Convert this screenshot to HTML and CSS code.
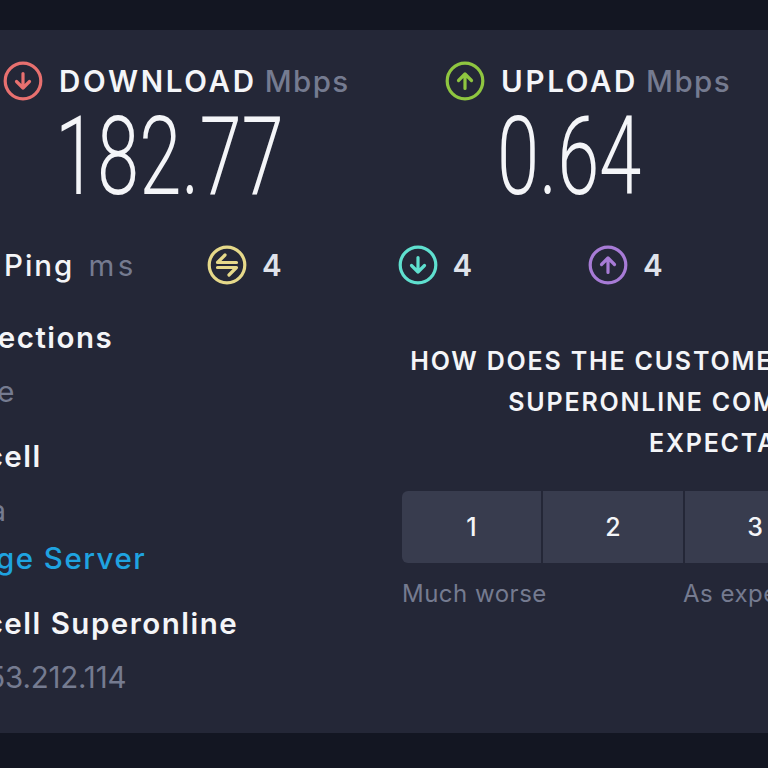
FILE: index.html
```html
<!DOCTYPE html>
<html lang="en">
<head>
  <meta charset="UTF-8">
  <meta name="viewport" content="width=device-width, initial-scale=1.0">
  <title>Speed Test Result</title>
  <link rel="stylesheet" href="styles.css">
</head>
<body>
  <div class="result-panel">
    <!-- Download and upload -->
    <div class="speed-row">
      <div class="speed-item">
        <div class="speed-label">
          <svg class="icon" viewBox="0 0 40 40" fill="none" stroke="#e8706f" stroke-width="3.2" stroke-linecap="round" stroke-linejoin="round">
            <circle cx="20" cy="20" r="17.8"/>
            <path d="M20 12.5V27M13.5 20.5l6.5 6.5 6.5-6.5"/>
          </svg>
          <span class="label-text">DOWNLOAD</span>
          <span class="label-unit">Mbps</span>
        </div>
        <div class="speed-value">182.77</div>
      </div>
      <div class="speed-item">
        <div class="speed-label">
          <svg class="icon" viewBox="0 0 40 40" fill="none" stroke="#8fc640" stroke-width="3.2" stroke-linecap="round" stroke-linejoin="round">
            <circle cx="20" cy="20" r="17.8"/>
            <path d="M20 27.5V13M13.5 19.5l6.5-6.5 6.5 6.5"/>
          </svg>
          <span class="label-text">UPLOAD</span>
          <span class="label-unit">Mbps</span>
        </div>
        <div class="speed-value">0.64</div>
      </div>
    </div>

    <!-- Ping row -->
    <div class="ping-row">
      <div class="ping-name">
        <span class="ping-label">Ping</span>
        <span class="ping-unit">ms</span>
      </div>
      <div class="ping-item">
        <svg class="icon" viewBox="0 0 40 40" fill="none" stroke="#e6d98a" stroke-width="3.2" stroke-linecap="round" stroke-linejoin="round">
          <circle cx="20" cy="20" r="17.8"/>
          <path d="M29.5 17.5h-19l7.5-7.5M10.5 22.5h19l-7.5 7.5"/>
        </svg>
        <span>4</span>
      </div>
      <div class="ping-item">
        <svg class="icon" viewBox="0 0 40 40" fill="none" stroke="#5fe0cf" stroke-width="3.2" stroke-linecap="round" stroke-linejoin="round">
          <circle cx="20" cy="20" r="17.8"/>
          <path d="M20 12.5V27M13.5 20.5l6.5 6.5 6.5-6.5"/>
        </svg>
        <span>4</span>
      </div>
      <div class="ping-item">
        <svg class="icon" viewBox="0 0 40 40" fill="none" stroke="#a77bd6" stroke-width="3.2" stroke-linecap="round" stroke-linejoin="round">
          <circle cx="20" cy="20" r="17.8"/>
          <path d="M20 27.5V13M13.5 19.5l6.5-6.5 6.5 6.5"/>
        </svg>
        <span>4</span>
      </div>
    </div>

    <div class="details-row">
      <!-- Connection details -->
      <div class="details">
        <div class="detail-group">
          <div class="detail-title">Connections</div>
          <div class="detail-sub">Single</div>
        </div>
        <div class="detail-group">
          <div class="detail-title">Turkcell</div>
          <div class="detail-sub">Bursa</div>
          <a class="detail-link" href="#">Change Server</a>
        </div>
        <div class="detail-group">
          <div class="detail-title">Turkcell Superonline</div>
          <div class="detail-sub detail-ip">178.253.212.114</div>
        </div>
      </div>

      <!-- Survey -->
      <div class="survey">
        <div class="survey-question">HOW DOES THE CUSTOMER SERVICE OF TURKCELL<br>SUPERONLINE COMPARE WITH YOUR<br>EXPECTATIONS?</div>
        <div class="survey-scale">
          <button class="scale-btn">1</button>
          <button class="scale-btn">2</button>
          <button class="scale-btn">3</button>
          <button class="scale-btn">4</button>
          <button class="scale-btn">5</button>
        </div>
        <div class="scale-labels">
          <span class="scale-low">Much worse</span>
          <span>As expected</span>
        </div>
      </div>
    </div>
  </div>
</body>
</html>
```

FILE: styles.css
```css
body {
  margin: 0;
  height: 768px;
  overflow: hidden;
  background-color: #131622;
  font-family: Inter, "Noto Sans", sans-serif;
  color: #f4f5f8;
  padding-top: 30px;
  box-sizing: border-box;
}

.result-panel {
  height: 703px;
  width: 1300px;
  margin-left: -84px;
  background-color: #242737;
}

.icon {
  width: 40px;
  height: 40px;
  flex: none;
}

.speed-row {
  display: flex;
  padding-left: 87px;
  padding-top: 30px;
}

.speed-item {
  width: 442px;
}

.speed-label {
  display: flex;
  align-items: center;
  gap: 16px;
  font-size: 29.5px;
  height: 42px;
}

.label-text {
  font-weight: 600;
  letter-spacing: 2.7px;
}

.label-unit {
  color: #757b90;
  font-weight: 500;
  letter-spacing: 1.4px;
  margin-left: -8px;
}

.speed-value {
  font-family: Roboto, sans-serif;
  font-weight: 300;
  font-size: 110px;
  line-height: 110px;
  margin-left: 52px;
  transform: scaleX(0.69);
  transform-origin: left;
}

.ping-row {
  display: flex;
  align-items: center;
  height: 42px;
  margin-top: 32px;
  font-size: 29.5px;
  padding-left: 88px;
}

.ping-name {
  width: 203px;
  display: flex;
  gap: 14px;
}

.ping-label {
  font-weight: 500;
  letter-spacing: 2px;
}

.ping-unit {
  color: #757b90;
  letter-spacing: 3.5px;
}

.ping-item {
  display: flex;
  align-items: center;
  gap: 15px;
  width: 190.5px;
  font-weight: 600;
  color: #dfe2ea;
}

.details-row {
  display: flex;
  margin-top: 34px;
}

.details {
  width: 484px;
  flex: none;
  font-size: 29.5px;
  line-height: 34px;
  letter-spacing: 1.5px;
}

.detail-group {
  padding-bottom: 31px;
}

.detail-title {
  font-weight: 600;
  margin-bottom: 20px;
}

.detail-sub {
  color: #757b90;
  letter-spacing: 2.5px;
}

.detail-ip {
  letter-spacing: -0.2px;
}

.detail-link {
  display: block;
  margin-top: 14px;
  color: #1fa3e0;
  font-weight: 500;
  text-decoration: none;
}

.survey {
  width: 740px;
  flex: none;
  margin-left: 2px;
  padding-top: 21px;
}

.survey-question {
  width: 722px;
  font-size: 25px;
  font-weight: 600;
  line-height: 41px;
  letter-spacing: 1.8px;
  text-align: center;
}

.survey-scale {
  display: flex;
  gap: 2px;
  margin-top: 27px;
}

.scale-btn {
  width: 140px;
  height: 72px;
  flex: none;
  border: none;
  padding: 0;
  background-color: #383c4e;
  color: #f4f5f8;
  font-family: inherit;
  font-size: 25px;
  font-weight: 500;
}

.scale-btn:first-child {
  width: 139px;
  border-radius: 6px 0 0 6px;
}

.scale-labels {
  display: flex;
  margin-top: 16px;
  font-size: 24px;
  letter-spacing: 0.5px;
  color: #757b90;
}

.scale-low {
  width: 281px;
}
```
